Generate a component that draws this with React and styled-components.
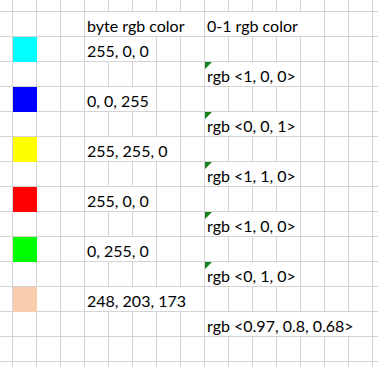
import React from "react";
import styled, { createGlobalStyle } from "styled-components";

const GlobalStyle = createGlobalStyle`
  html, body {
    margin: 0;
    padding: 0;
    background: #ffffff;
    overflow: hidden;
  }
`;

const Sheet = styled.div`
  display: grid;
  grid-template-columns: 13px repeat(16, 24px);
  grid-template-rows: 12px repeat(15, 25px);
  width: 378px;
  height: 367px;
  overflow: hidden;
  font-family: Lato, "Open Sans", sans-serif;
  font-size: 16px;
  color: #000000;
`;

const Cell = styled.div`
  grid-column: span ${props => props.span || 1};
  border-right: 1px solid #d4d4d4;
  border-bottom: 1px solid #d4d4d4;
  display: flex;
  align-items: flex-end;
  padding: 0 0 2px 2px;
  line-height: 1;
  white-space: nowrap;
  overflow: visible;
  position: relative;
  min-width: 0;
`;

const Swatch = styled.div`
  background: ${props => props.fill};
  border-right: 1px solid ${props => props.fill};
  border-bottom: 1px solid ${props => props.fill};
  box-shadow: -1px -1px 0 0 ${props => props.fill};
`;

const Flag = styled.span`
  position: absolute;
  top: 0;
  left: 0;
  width: 0;
  height: 0;
  border-top: 7px solid #17801d;
  border-right: 7px solid transparent;
`;

const BYTE_COL = 4;
const UNIT_COL = 9;
const COLS = 17;

const rows = [
  {},
  { byte: "byte rgb color", byteSpan: 5, unit: "0-1 rgb color", unitSpan: 5 },
  { fill: "#00ffff", byte: "255, 0, 0", byteSpan: 3 },
  { unit: "rgb <1, 0, 0>", unitSpan: 4, flag: true },
  { fill: "#0000ff", byte: "0, 0, 255", byteSpan: 3 },
  { unit: "rgb <0, 0, 1>", unitSpan: 4, flag: true },
  { fill: "#ffff00", byte: "255, 255, 0", byteSpan: 4 },
  { unit: "rgb <1, 1, 0>", unitSpan: 4, flag: true },
  { fill: "#ff0000", byte: "255, 0, 0", byteSpan: 3 },
  { unit: "rgb <1, 0, 0>", unitSpan: 4, flag: true },
  { fill: "#00ff00", byte: "0, 255, 0", byteSpan: 3 },
  { unit: "rgb <0, 1, 0>", unitSpan: 4, flag: true },
  { fill: "rgb(248, 203, 173)", byte: "248, 203, 173", byteSpan: 5 },
  { unit: "rgb <0.97, 0.8, 0.68>", unitSpan: 7 },
  {},
  {}
];

const renderRow = (row, r) => {
  const cells = [];
  let c = 0;
  while (c < COLS) {
    const key = `${r}-${c}`;
    if (c === 1 && row.fill) {
      cells.push(<Swatch key={key} fill={row.fill} />);
      c += 1;
    } else if (c === BYTE_COL && row.byte) {
      cells.push(
        <Cell key={key} span={row.byteSpan}>
          {row.byte}
        </Cell>
      );
      c += row.byteSpan;
    } else if (c === UNIT_COL && row.unit) {
      cells.push(
        <Cell key={key} span={row.unitSpan}>
          {row.flag && <Flag />}
          {row.unit}
        </Cell>
      );
      c += row.unitSpan;
    } else {
      cells.push(<Cell key={key} />);
      c += 1;
    }
  }
  return cells;
};

const App = () => (
  <>
    <GlobalStyle />
    <Sheet>{rows.map(renderRow)}</Sheet>
  </>
);

export default App;
